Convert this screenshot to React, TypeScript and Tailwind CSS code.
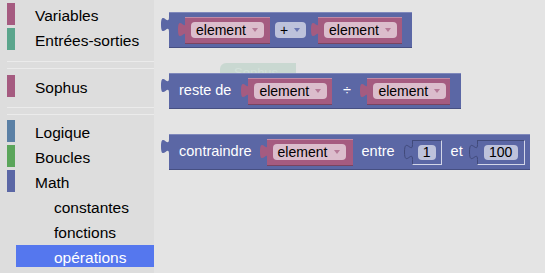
import React from "react";

const Tab = ({ fill, left = "left-[-8px]" }: { fill: string; left?: string }) => (
  <svg className={`absolute top-[4px] ${left}`} width="9" height="16" viewBox="0 0 9 16">
    <path d="M8,0 c0,10 -8,-8 -8,7.5 s8,-2.5 8,7.5 h1 v-15 z" fill={fill} />
  </svg>
);

const Arrow = ({ color }: { color: string }) => (
  <svg width="6" height="4" viewBox="0 0 6 4" className="shrink-0">
    <path d="M0,0 h6 l-3,4 z" fill={color} />
  </svg>
);

const Dropdown = ({ label, bg, arrow, w }: { label: string; bg: string; arrow: string; w: string }) => (
  <div className={`flex h-[16px] items-center justify-between rounded-[4px] pl-[5px] pr-[6px] text-[14px] leading-none text-black ${bg} ${w}`}>
    <span>{label}</span>
    <Arrow color={arrow} />
  </div>
);

const VarBlock = ({ className }: { className: string }) => (
  <div className={`relative flex h-[27px] items-center border-t border-b border-t-[#c08aa6] border-b-[#7a4460] bg-[#a55b80] pl-[6px] ${className}`}>
    <Tab fill="#a55b80" left="left-[-7px]" />
    <Dropdown label="element" bg="bg-[#dbbdcc]" arrow="#b57a97" w="w-[73px]" />
  </div>
);

const NumSlot = ({ value, w, fw }: { value: string; w: string; fw: string }) => (
  <div className={`relative flex h-[25px] items-center justify-center border border-t-[#414a7a] border-l-[#414a7a] border-r-[#d3d6e8] border-b-[#d3d6e8] bg-[#5b67a5] ${w}`}>
    <svg className="absolute left-[-9px] top-[3px]" width="9" height="17" viewBox="0 0 9 17">
      <path d="M8,0.5 c0,10 -7.5,-8 -7.5,7.5 s7.5,-2.5 7.5,7.5 h1 v-15 z" fill="#5b67a5" />
      <path d="M8.5,0.5 c0,10 -8,-8 -8,7.5 s8,-2.5 8,7.5" fill="none" stroke="#414a7a" strokeWidth="1" />
    </svg>
    <div className={`flex h-[15px] items-center justify-center rounded-[4px] bg-[#bdc2db] text-[14px] leading-none text-black ${fw}`}>
      {value}
    </div>
  </div>
);

const Block = ({ children }: { children: React.ReactNode }) => (
  <div className="relative flex h-[36px] items-center border-t border-b border-t-[#7f88bb] border-b-[#464f82] bg-[#5b67a5] text-[14.5px] text-white">
    <Tab fill="#5b67a5" />
    {children}
  </div>
);

const CatRow = ({ label, bar }: { label: string; bar: string }) => (
  <div className={`mb-[3px] ml-[7px] flex h-[22px] items-center border-l-[8px] pl-[20px] pt-[3px] text-[15.5px] text-black ${bar}`}>
    {label}
  </div>
);

const SubRow = ({ label, selected }: { label: string; selected?: boolean }) => (
  <div
    className={`mb-[3px] ml-[16px] flex h-[22px] items-center pl-[38px] pt-[3px] text-[15.5px] ${
      selected ? "bg-[#5577ee] text-white" : "text-black"
    }`}
  >
    {label}
  </div>
);

const Separator = ({ h }: { h: string }) => (
  <div className={`flex flex-col justify-center gap-[6px] pt-[2px] ${h}`}>
    <div className="ml-[7px] h-px bg-[#ebebeb]" />
    <div className="ml-[7px] h-px bg-[#ebebeb]" />
  </div>
);

const Sidebar = () => (
  <div className="flex h-full w-[154px] shrink-0 flex-col bg-[#dddddd] pt-[3px]">
    <CatRow label="Variables" bar="border-[#a55b80]" />
    <CatRow label="Entrées-sorties" bar="border-[#5ba58c]" />
    <Separator h="h-[22px]" />
    <CatRow label="Sophus" bar="border-[#a55b80]" />
    <Separator h="h-[20px]" />
    <CatRow label="Logique" bar="border-[#5b80a5]" />
    <CatRow label="Boucles" bar="border-[#5ba55b]" />
    <CatRow label="Math" bar="border-[#5b67a5]" />
    <SubRow label="constantes" />
    <SubRow label="fonctions" />
    <SubRow label="opérations" selected />
  </div>
);

const Workspace = () => (
  <div className="relative flex flex-1 flex-col items-start gap-[25px] bg-[#e4e4e4] pl-[15px] pt-[12px]">
    {/* faded block peeking out behind "reste de" */}
    <div className="absolute left-[66px] top-[63px] flex h-[14px] w-[76px] items-start rounded-tl-[6px] bg-[#c9d8d1] pl-[14px] pt-[3px] text-[13px] leading-none text-[#d4e1db]">
      Sophus
    </div>

    <Block>
      <VarBlock className="ml-[16px] w-[85px]" />
      <div className="ml-[5px]">
        <Dropdown label="+" bg="bg-[#bdc2db]" arrow="#6a76b2" w="w-[31px]" />
      </div>
      <VarBlock className="ml-[12px] w-[84px]" />
      <div className="w-[10px]" />
    </Block>

    <Block>
      <span className="ml-[10px]">reste de</span>
      <VarBlock className="ml-[17px] w-[84px]" />
      <span className="w-[29px] text-center">÷</span>
      <VarBlock className="ml-[6px] w-[83px]" />
      <div className="w-[11px]" />
    </Block>

    <Block>
      <span className="ml-[10px]">contraindre</span>
      <VarBlock className="ml-[15px] w-[86px]" />
      <span className="ml-[9px]">entre</span>
      <div className="ml-[17px]">
        <NumSlot value="1" w="w-[30px]" fw="w-[18px]" />
      </div>
      <span className="ml-[9px]">et</span>
      <div className="ml-[14px]">
        <NumSlot value="100" w="w-[48px]" fw="w-[34px]" />
      </div>
      <div className="w-[5px]" />
    </Block>
  </div>
);

export default function App() {
  return (
    <div className="flex h-[273px] w-[545px] overflow-hidden font-['Liberation_Sans',Arial,sans-serif]">
      <Sidebar />
      <Workspace />
    </div>
  );
}
